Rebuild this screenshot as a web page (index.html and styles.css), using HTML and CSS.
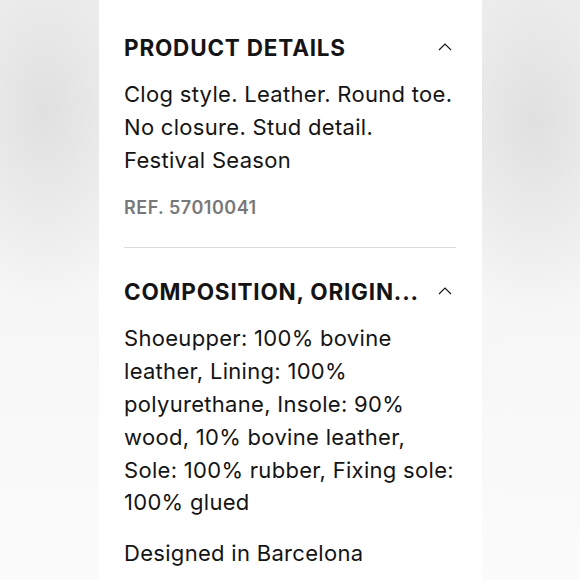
FILE: index.html
```html
<!DOCTYPE html>
<html lang="en">
<head>
    <meta charset="UTF-8">
    <title>Product details</title>
    <link rel="stylesheet" href="styles.css">
</head>
<body>
    <div class="sheet">
        <!-- Product details -->
        <section class="block">
            <div class="block-head">
                <h2>PRODUCT DETAILS</h2>
                <svg class="chevron" width="14" height="8" viewBox="0 0 14 8"><path d="M1 7 L7 1 L13 7" fill="none" stroke="#111" stroke-width="1.1"/></svg>
            </div>
            <p class="text">Clog style. Leather. Round toe.<br>No closure. Stud detail.<br>Festival Season</p>
            <p class="ref">REF. 57010041</p>
        </section>

        <!-- Composition -->
        <section class="block last">
            <div class="block-head">
                <h2>COMPOSITION, ORIGIN...</h2>
                <svg class="chevron" width="14" height="8" viewBox="0 0 14 8"><path d="M1 7 L7 1 L13 7" fill="none" stroke="#111" stroke-width="1.1"/></svg>
            </div>
            <p class="text">Shoeupper: 100% bovine<br>leather, Lining: 100%<br>polyurethane, Insole: 90%<br>wood, 10% bovine leather,<br>Sole: 100% rubber, Fixing sole:<br>100% glued</p>
            <p class="text">Designed in Barcelona</p>
        </section>
    </div>
</body>
</html>
```

FILE: styles.css
```css
html, body {
    height: 100%;
}
body {
    margin: 0;
    overflow: hidden;
    display: flex;
    justify-content: center;
    background-color: #f8f8f8;
    background-image:
        radial-gradient(ellipse 120px 200px at 45px 110px, #e0e0e0, rgba(240, 240, 240, 0) 100%),
        radial-gradient(ellipse 120px 200px at 535px 120px, #e0e0e0, rgba(240, 240, 240, 0) 100%),
        linear-gradient(#f2f2f2, #fbfbfb);
    font-family: Inter, "Liberation Sans", sans-serif;
    color: #141414;
}
.sheet {
    width: 383px;
    margin-left: 1px;
    background: #fff;
    padding: 32px 26px 0 25px;
    box-sizing: border-box;
}
.block {
    padding-bottom: 29px;
    border-bottom: 1px solid #dcdcdc;
    margin-bottom: 28px;
}
.block.last {
    border-bottom: none;
    padding-bottom: 0;
    margin-bottom: 0;
}
.block-head {
    display: flex;
    justify-content: space-between;
    align-items: center;
    height: 30px;
    margin-bottom: 16px;
}
h2 {
    margin: 0;
    font-size: 22.5px;
    font-weight: 700;
    letter-spacing: 0.8px;
    white-space: nowrap;
}
.chevron {
    margin-right: 4px;
}
.text {
    margin: 0 0 18px;
    font-size: 22px;
    line-height: 32.8px;
    letter-spacing: 0.3px;
    white-space: nowrap;
}
.text:last-child {
    margin-bottom: 0;
}
.ref {
    margin: 21px 0 0;
    font-size: 18px;
    font-weight: 600;
    letter-spacing: 0.5px;
    color: #787878;
}
```
